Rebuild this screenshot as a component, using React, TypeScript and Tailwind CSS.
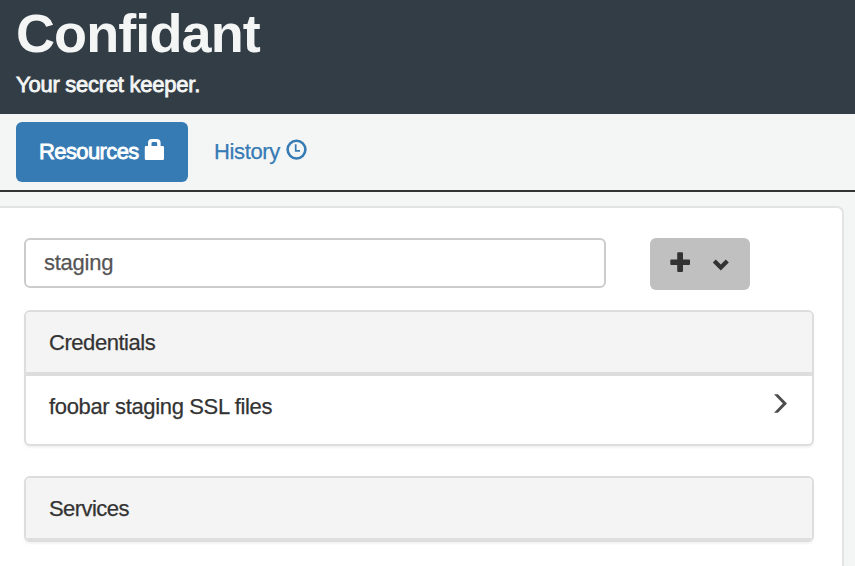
import React from "react";

function LockIcon() {
  return (
    <svg className="h-[22px] w-5 shrink-0" viewBox="0 0 20 22" fill="currentColor">
      <path
        fillRule="evenodd"
        d="M4 8V4.8Q4 1 7.8 1H12.8Q16.6 1 16.6 4.8V8H18.8Q20 8 20 9.2V20.8Q20 22 18.8 22H2Q0.8 22 0.8 20.8V9.2Q0.8 8 2 8ZM7.5 8H13.2V5.4Q13.2 4 11.9 4H8.8Q7.5 4 7.5 5.4Z"
      />
    </svg>
  );
}

function ClockIcon() {
  return (
    <svg className="h-[23px] w-[23px] shrink-0" viewBox="0 0 23 23" fill="none" stroke="currentColor">
      <circle cx="11.5" cy="11.6" r="8.9" strokeWidth="2.6" />
      <path d="M10.7 6.2V12.8H15" strokeWidth="1.7" />
    </svg>
  );
}

function Panel({ title, children }: { title: string; children?: React.ReactNode }) {
  return (
    <section className="w-[790px] overflow-hidden rounded-[6px] border-2 border-[#dddddd] bg-white shadow-[0_2px_2px_rgba(0,0,0,0.05)]">
      <h2
        className={
          children
            ? "h-[64px] border-b-4 border-[#dddddd] bg-[#f4f4f4] pt-4 pl-[23px] tracking-[-0.45px]"
            : "h-[62px] border-b-2 border-[#dddddd] bg-[#f4f4f4] pt-4 pl-[23px] tracking-[-0.55px]"
        }
      >
        {title}
      </h2>
      {children}
    </section>
  );
}

export default function App() {
  return (
    <div className="h-[566px] w-[855px] overflow-hidden bg-[#f4f6f5] font-['Liberation_Sans',Arial,sans-serif] text-[22px] leading-[30px] tracking-[-0.35px] text-[#333333] [-webkit-text-stroke:0.25px_currentColor]">
      <header className="h-[114px] bg-[#333d46] pt-[3px] pl-4 text-[#f4f6f5]">
        <h1 className="text-[54px] leading-[60px] font-bold tracking-[-0.9px] [-webkit-text-stroke:0px]">Confidant</h1>
        <p className="mt-[7px] tracking-[-0.25px] [-webkit-text-stroke:0.8px_#f4f6f5]">Your secret keeper.</p>
      </header>
      <nav className="flex h-[78px] border-b-2 border-[#333333] pt-2 pl-4">
        <a className="flex h-[60px] w-[172px] rounded-[6px] bg-[#377bb5] pt-[15px] pl-[23px] text-white">
          <span className="w-[105px] tracking-[-0.6px] whitespace-nowrap [-webkit-text-stroke:0.8px_white]">Resources</span>
          <span className="mt-px">
            <LockIcon />
          </span>
        </a>
        <a className="flex pt-[15px] pl-[26px] text-[#377bb5] [-webkit-text-stroke:0.25px_#377bb5]">
          <span className="w-[71px] whitespace-nowrap">History</span>
          <span className="mt-px">
            <ClockIcon />
          </span>
        </a>
      </nav>
      <main className="mt-[14px] h-[400px] w-[844px] rounded-tr-[7px] border-t-2 border-r-2 border-[#e3e3e3] bg-white pt-[30px] pl-6">
        <div className="flex">
          <input
            className="h-[50px] w-[582px] rounded-[6px] border-2 border-[#cccccc] bg-white pl-[18px] tracking-[-0.25px] text-[#555555] outline-none [-webkit-text-stroke:0.25px_#555555]"
            defaultValue="staging"
          />
          <button className="ml-[44px] flex h-[52px] w-[100px] rounded-[6px] bg-[#c0c0c0] text-[#333333]">
            <svg className="h-[52px] w-[100px]" viewBox="0 0 100 52">
              <path
                d="M28.2 14.2H32Q33 14.2 33 15.2V21.4H39Q40 21.4 40 22.4V26Q40 27 39 27H33V33Q33 34 32 34H28.2Q27.2 34 27.2 33V27H21.3Q20.3 27 20.3 26V22.4Q20.3 21.4 21.3 21.4H27.2V15.2Q27.2 14.2 28.2 14.2Z"
                fill="currentColor"
              />
              <path d="M64.3 22.9L70.8 29.4L77.3 22.9" fill="none" stroke="currentColor" strokeWidth="4.3" />
            </svg>
          </button>
        </div>
        <div className="mt-5 flex flex-col gap-[30px]">
          <Panel title="Credentials">
            <div className="flex h-[68px] justify-between pt-4 pr-6 pl-[23px]">
              <span>foobar staging SSL files</span>
              <svg className="mt-px h-[22px] w-[16px]" viewBox="0 0 16 22" fill="#4d4d4d">
                <path d="M2 1.2H5.9L15 10.5L5.9 19.8H2L10.8 10.5Z" />
              </svg>
            </div>
          </Panel>
          <Panel title="Services" />
        </div>
      </main>
    </div>
  );
}
